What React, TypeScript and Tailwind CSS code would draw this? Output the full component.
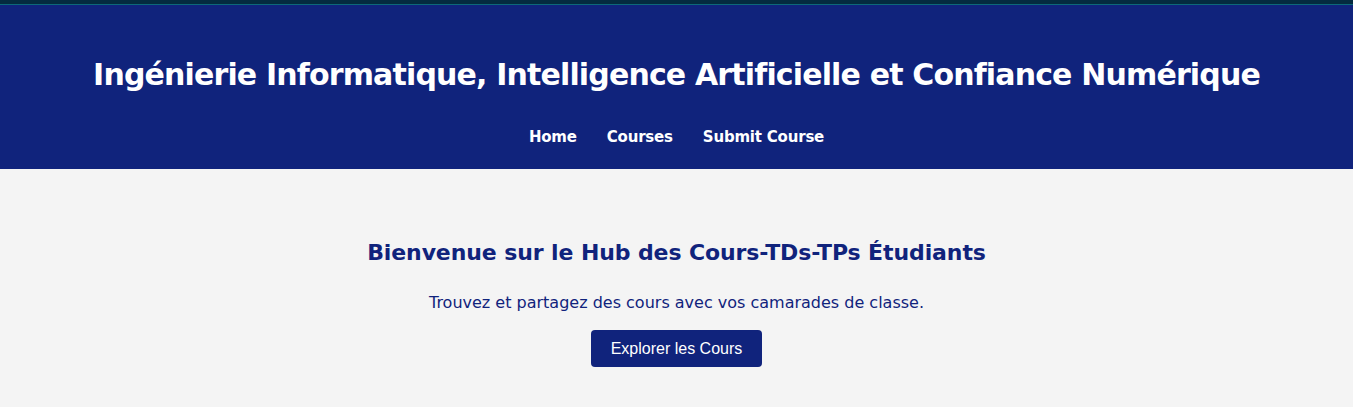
export default function App() {
  return (
    <div className="min-h-[407px] bg-[#f4f4f4] font-['DejaVu_Sans',sans-serif]">
      {/* barre du haut */}
      <div className="h-[4px] bg-[#042b3f]" />
      <div className="h-px bg-[#0d6878]" />

      <header className="bg-[#10237c] pt-[47px] pb-[20px] text-center text-white">
        <h1 className="text-[30px] leading-[45px] font-bold tracking-[-0.85px]">
          Ingénierie Informatique, Intelligence Artificielle et Confiance Numérique
        </h1>
        <nav className="mt-[28px] flex items-center justify-center gap-[30px] text-[15px] leading-[24px] font-bold tracking-[-0.2px]">
          <a href="#">Home</a>
          <a href="#">Courses</a>
          <a href="#">Submit Course</a>
        </nav>
      </header>

      <main className="flex flex-col items-center pt-[67px] text-center text-[#10237c]">
        <h2 className="text-[22px] leading-[33px] font-bold tracking-[-0.1px]">
          Bienvenue sur le Hub des Cours-TDs-TPs Étudiants
        </h2>
        <p className="mt-[22px] text-[16px] leading-[24px]">
          Trouvez et partagez des cours avec vos camarades de classe.
        </p>
        <button className="mt-[15px] h-[37px] w-[171px] rounded-[4px] bg-[#10237c] font-['Liberation_Sans',sans-serif] text-[16px] text-white">
          Explorer les Cours
        </button>
      </main>
    </div>
  );
}
